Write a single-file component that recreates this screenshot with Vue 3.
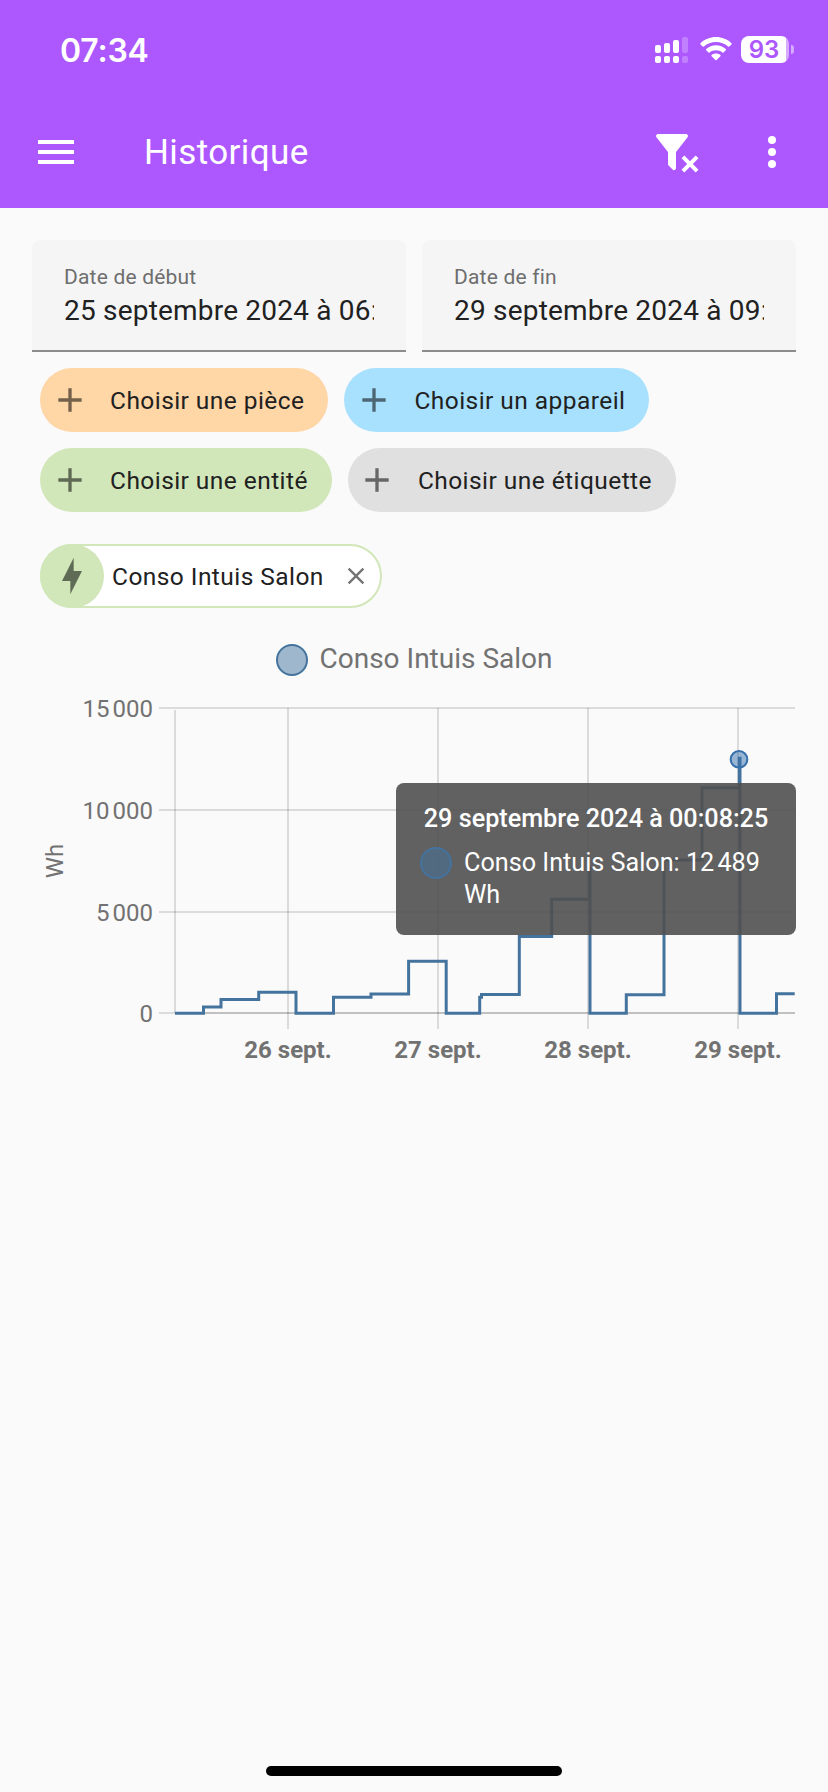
<template>
<div class="page">
<header class="header">
<div class="status-bar">
<span class="clock">07:34</span>
<svg class="signal" viewBox="0 0 33 26" width="33" height="26">
<g fill="#fff">
<rect x="0" y="8" width="6" height="8" rx="2" /><rect x="9" y="6" width="6" height="10" rx="2" /><rect x="18" y="3" width="6" height="13" rx="2" />
<rect x="0" y="19" width="6" height="7" rx="2" /><rect x="9" y="19" width="6" height="7" rx="2" /><rect x="18" y="19" width="6" height="7" rx="2" />
</g>
<g fill="#fff" opacity=".25"><rect x="27" y="0" width="6" height="16" rx="2" /><rect x="27" y="19" width="6" height="7" rx="2" /></g>
</svg>
<svg class="wifi" viewBox="0 0 32 24" width="32" height="24" fill="#fff">
<path d="M16 0C22 0 27.500 2.300 31.500 6.200Q32 6.800 31.500 7.400L29.300 9.600Q28.700 10.100 28.100 9.600C24.800 6.600 20.600 5 16 5S7.200 6.600 3.900 9.600Q3.300 10.100 2.700 9.600L.5 7.400Q0 6.800.5 6.200C4.500 2.300 10 0 16 0Z" />
<path d="M16 8.300C19.800 8.300 23.200 9.700 25.800 12.100Q26.400 12.700 25.800 13.300L23.500 15.500Q23 16 22.400 15.500C20.700 14 18.400 13.200 16 13.200S11.300 14 9.600 15.500Q9 16 8.500 15.500L6.200 13.300Q5.600 12.700 6.200 12.100C8.800 9.700 12.200 8.300 16 8.300Z" />
<path d="M16 16.500C17.700 16.500 19.200 17 20.400 18Q21 18.600 20.400 19.200L16.600 23Q16 23.600 15.400 23L11.600 19.200Q11 18.600 11.600 18C12.800 17 14.300 16.500 16 16.500Z" />
</svg>
<div class="battery"><span>93</span></div>
<i class="battery-cap"></i>
</div>
<div class="toolbar">
<svg class="menu-icon" viewBox="0 0 24 24" width="48" height="48"><path fill="#fff" d="M3 6h18v2H3zM3 11h18v2H3zM3 16h18v2H3z" /></svg>
<h1 class="title">Historique</h1>
<svg class="filter-icon" viewBox="0 0 24 24" width="48" height="48"><path fill="#fff" d="M14.760 20.830L17.600 18l-2.840-2.830 1.410-1.410L19 16.570l2.830-2.810 1.410 1.410L20.430 18l2.810 2.830-1.410 1.410L19 19.400l-2.830 2.840-1.410-1.410M12 12v7.880c.04.3-.06.620-.29.830a.996.996 0 0 1-1.410 0L8.290 18.700a.989.989 0 0 1-.29-.830V12h-.030L2.210 4.620a1 1 0 0 1 .17-1.400c.19-.14.400-.220.620-.220h14c.220 0 .430.080.620.220a1 1 0 0 1 .17 1.400L12.030 12H12z" /></svg>
<svg class="dots-icon" viewBox="0 0 24 24" width="48" height="48" fill="#fff"><circle cx="12" cy="6" r="2" /><circle cx="12" cy="12" r="2" /><circle cx="12" cy="18" r="2" /></svg>
</div>
</header>

<main class="content">
<div class="dates">
<label v-for="d in dates" :key="d.label" class="date-field">
<span class="date-label">{{ d.label }}</span>
<span class="date-value">{{ d.value }}</span>
</label>
</div>

<div class="chips">
<button v-for="p in pickers" :key="p.text" class="chip" :class="p.kind">
<svg viewBox="0 0 24 24" width="40" height="40"><path d="M19 13h-6v6h-2v-6H5v-2h6V5h2v6h6v2z" /></svg>
<span>{{ p.text }}</span>
</button>
</div>

<div class="selected">
<div class="entity">
<div class="entity-icon"><svg viewBox="0 0 24 24" width="44" height="44"><path d="M11 15H6l7-14v8h5l-7 14v-8z" /></svg></div>
<span class="entity-name">Conso Intuis Salon</span>
<svg class="close" viewBox="0 0 24 24" width="28" height="28"><path d="M19 6.410L17.590 5 12 10.590 6.410 5 5 6.410 10.590 12 5 17.590 6.410 19 12 13.410 17.590 19 19 17.590 13.410 12z" /></svg>
</div>
</div>

<div class="legend"><i class="bullet"></i><span>Conso Intuis Salon</span></div>

<div class="chart">
<svg viewBox="0 0 828 390" width="828" height="390">
<g class="grid">
<line v-for="t in yTicks" :key="t.y" x1="159" x2="795" :y1="t.y" :y2="t.y" />
<line x1="175" x2="175" y1="20" y2="323" />
<line x1="175" x2="795" y1="323" y2="323" />
<line v-for="t in xTicks" :key="t.x" :x1="t.x" :x2="t.x" y1="18" y2="339" />
</g>
<text v-for="t in yTicks" :key="t.label" class="tick" x="153" :y="t.y + 8.500" text-anchor="end">{{ t.label }}</text>
<text v-for="t in xTicks" :key="t.label" class="tick bold" :x="t.x" y="368" text-anchor="middle">{{ t.label }}</text>
<text class="tick unit" transform="translate(62.500 171) rotate(-90)" text-anchor="middle">Wh</text>
<path class="line" :d="linePath" />
<circle class="point" cx="739" cy="69.300" r="8.300" />
</svg>
<div class="tooltip">
<div class="tooltip-title">29 septembre 2024 à 00:08:25</div>
<div class="tooltip-row"><i class="bullet"></i><span>Conso Intuis Salon: 12&#8239;489 Wh</span></div>
</div>
</div>
</main>
<div class="home-bar"></div>
</div>
</template>
<script setup>
import { computed } from "vue"
const dates = [
  { label: "Date de début", value: "25 septembre 2024 à 06:" },
  { label: "Date de fin", value: "29 septembre 2024 à 09:" },
]
const pickers = [
  { text: "Choisir une pièce", kind: "area" },
  { text: "Choisir un appareil", kind: "device" },
  { text: "Choisir une entité", kind: "entity-pick" },
  { text: "Choisir une étiquette", kind: "label-pick" },
]
const yTicks = [
  { label: "15\u202f000", y: 18 },
  { label: "10\u202f000", y: 120 },
  { label: "5\u202f000", y: 222 },
  { label: "0", y: 323 },
]
const xTicks = [
  { label: "26 sept.", x: 288 },
  { label: "27 sept.", x: 438 },
  { label: "28 sept.", x: 588 },
  { label: "29 sept.", x: 738 },
]
// [x, y] of each step start
const steps = [
  [175, 323.3], [203.5, 317], [221, 309.5], [258.7, 302.3], [296, 323.3],
  [333.5, 307.3], [371, 304], [408.6, 271.3], [446.2, 323.3], [479.7, 307.3],
  [481.5, 304.5], [519.3, 246.5], [551.7, 209.3], [589.5, 179], [590, 323.3],
  [626.3, 304.7], [664, 170], [702, 97.7], [739.3, 68.3], [740, 323.3], [776.5, 303.7],
]
const linePath = computed(() => {
  let d = "M175 323.3"
  for (const [x, y] of steps) d += `H${x}V${y}`
  return d + "H794.7"
})
</script>
<style>
body { background: #fafafa; }
</style>
<style scoped>
.page { width: 828px; height: 1792px; display: flex; flex-direction: column; background: #fafafa; font-family: Roboto, "Noto Sans", sans-serif; color: #212121; overflow: hidden; }
.page svg { display: block; flex: none; }
.header { height: 208px; flex: none; background: #ad57ff; color: #fff; }
.status-bar { height: 96px; display: flex; align-items: flex-start; padding: 0 34px 0 60px; box-sizing: border-box; }
.clock { width: 595px; margin-top: 32px; font: 600 32px/38px Inter, sans-serif; letter-spacing: -0.2px; }
.signal { margin-top: 37px; }
.wifi { margin: 37px 9px 0 12px; }
.battery { width: 48px; height: 27px; margin-top: 36px; border-radius: 8px; background: linear-gradient(90deg, #fff 45px, rgba(255, 255, 255, .5) 45px); color: #ad57ff; text-align: center; font: 600 24px/28px Inter, sans-serif; }
.battery span { display: block; width: 46px; }
.battery-cap { width: 3px; height: 9px; margin: 45px 0 0 2px; border-radius: 0 4px 4px 0; background: rgba(255, 255, 255, .5); }
.toolbar { height: 112px; display: flex; align-items: center; padding-left: 32px; }
.title { width: 508px; margin: 2px 0 0 64px; font-size: 35px; font-weight: 400; line-height: 48px; letter-spacing: .4px; }
.dots-icon { margin-left: 48px; }
.content { flex: 1; }
.dates { display: flex; gap: 16px; padding: 32px 32px 0; }
.date-field { flex: 1; min-width: 0; height: 112px; padding: 24px 32px 0; box-sizing: border-box; display: flex; flex-direction: column; background: #f5f5f5; border-bottom: 2px solid #8c8c8c; border-radius: 8px 8px 0 0; }
.date-label { font-size: 21px; line-height: 26px; color: #6e6e6e; letter-spacing: .2px; }
.date-value { margin-top: 3px; font-size: 28px; line-height: 36px; letter-spacing: .2px; white-space: nowrap; overflow: hidden; }
.chips { display: flex; flex-wrap: wrap; gap: 16px; padding: 16px 40px 0; }
.chip { display: flex; align-items: center; height: 64px; padding: 0 24px 0 10px; border: 0; border-radius: 32px; font: 400 24.5px/32px Roboto, sans-serif; letter-spacing: .44px; color: #212121; }
.chip svg { fill: #000; opacity: .54; margin-right: 20px; }
.chip span { padding-top: 1px; }
.area { background: #ffd6a5; }
.device { background: #a8e1fd; }
.entity-pick { background: #d2e7b9; }
.label-pick { background: #e0e0e0; }
.label-pick svg { margin: 0 21px 0 -1px; }
.selected { padding: 32px 40px 0; }
.entity { width: 342px; height: 64px; box-sizing: border-box; border: 2px solid #d2e7b9; border-radius: 32px; background: #fff; display: flex; align-items: center; }
.entity-icon { width: 64px; height: 64px; margin-left: -2px; border-radius: 50%; background: #d2e7b9; display: flex; align-items: center; justify-content: center; flex: none; }
.entity-icon svg { width: 40px; height: 40px; fill: #606b55; }
.entity-name { width: 222px; margin-left: 8px; padding-top: 1px; font-size: 24.5px; line-height: 32px; letter-spacing: .44px; white-space: nowrap; }
.close { margin-left: 8px; fill: #737373; }
.legend { display: flex; justify-content: center; align-items: center; gap: 12px; margin-top: 34px; height: 36px; font-size: 28px; line-height: 36px; color: #727272; }
.legend span { padding-bottom: 2px; }
.bullet { width: 32px; height: 32px; box-sizing: border-box; flex: none; border: 2px solid #44739e; border-radius: 50%; background: rgba(68, 115, 158, .5); }
.chart { position: relative; margin-top: 12px; height: 390px; }
.grid line { stroke: #000; stroke-opacity: .12; stroke-width: 2; }
.tick { font-size: 24px; fill: #727272; }
.bold { font-weight: 700; }
.line { fill: none; stroke: #44739e; stroke-width: 3; }
.point { fill: rgba(54, 112, 172, .5); stroke: #3670ac; stroke-width: 2; }
.tooltip { position: absolute; left: 396px; top: 93px; width: 400px; height: 152px; padding: 20px 24px 0; box-sizing: border-box; border-radius: 8px; background: rgba(80, 80, 80, .9); color: #fff; font-size: 25.2px; line-height: 32px; }
.tooltip-title { text-align: center; font-weight: 500; white-space: nowrap; }
.tooltip-row { display: flex; gap: 12px; margin-top: 12px; }
.home-bar { width: 296px; height: 10px; margin: 0 auto 16px; border-radius: 5px; background: #000; flex: none; }
</style>
